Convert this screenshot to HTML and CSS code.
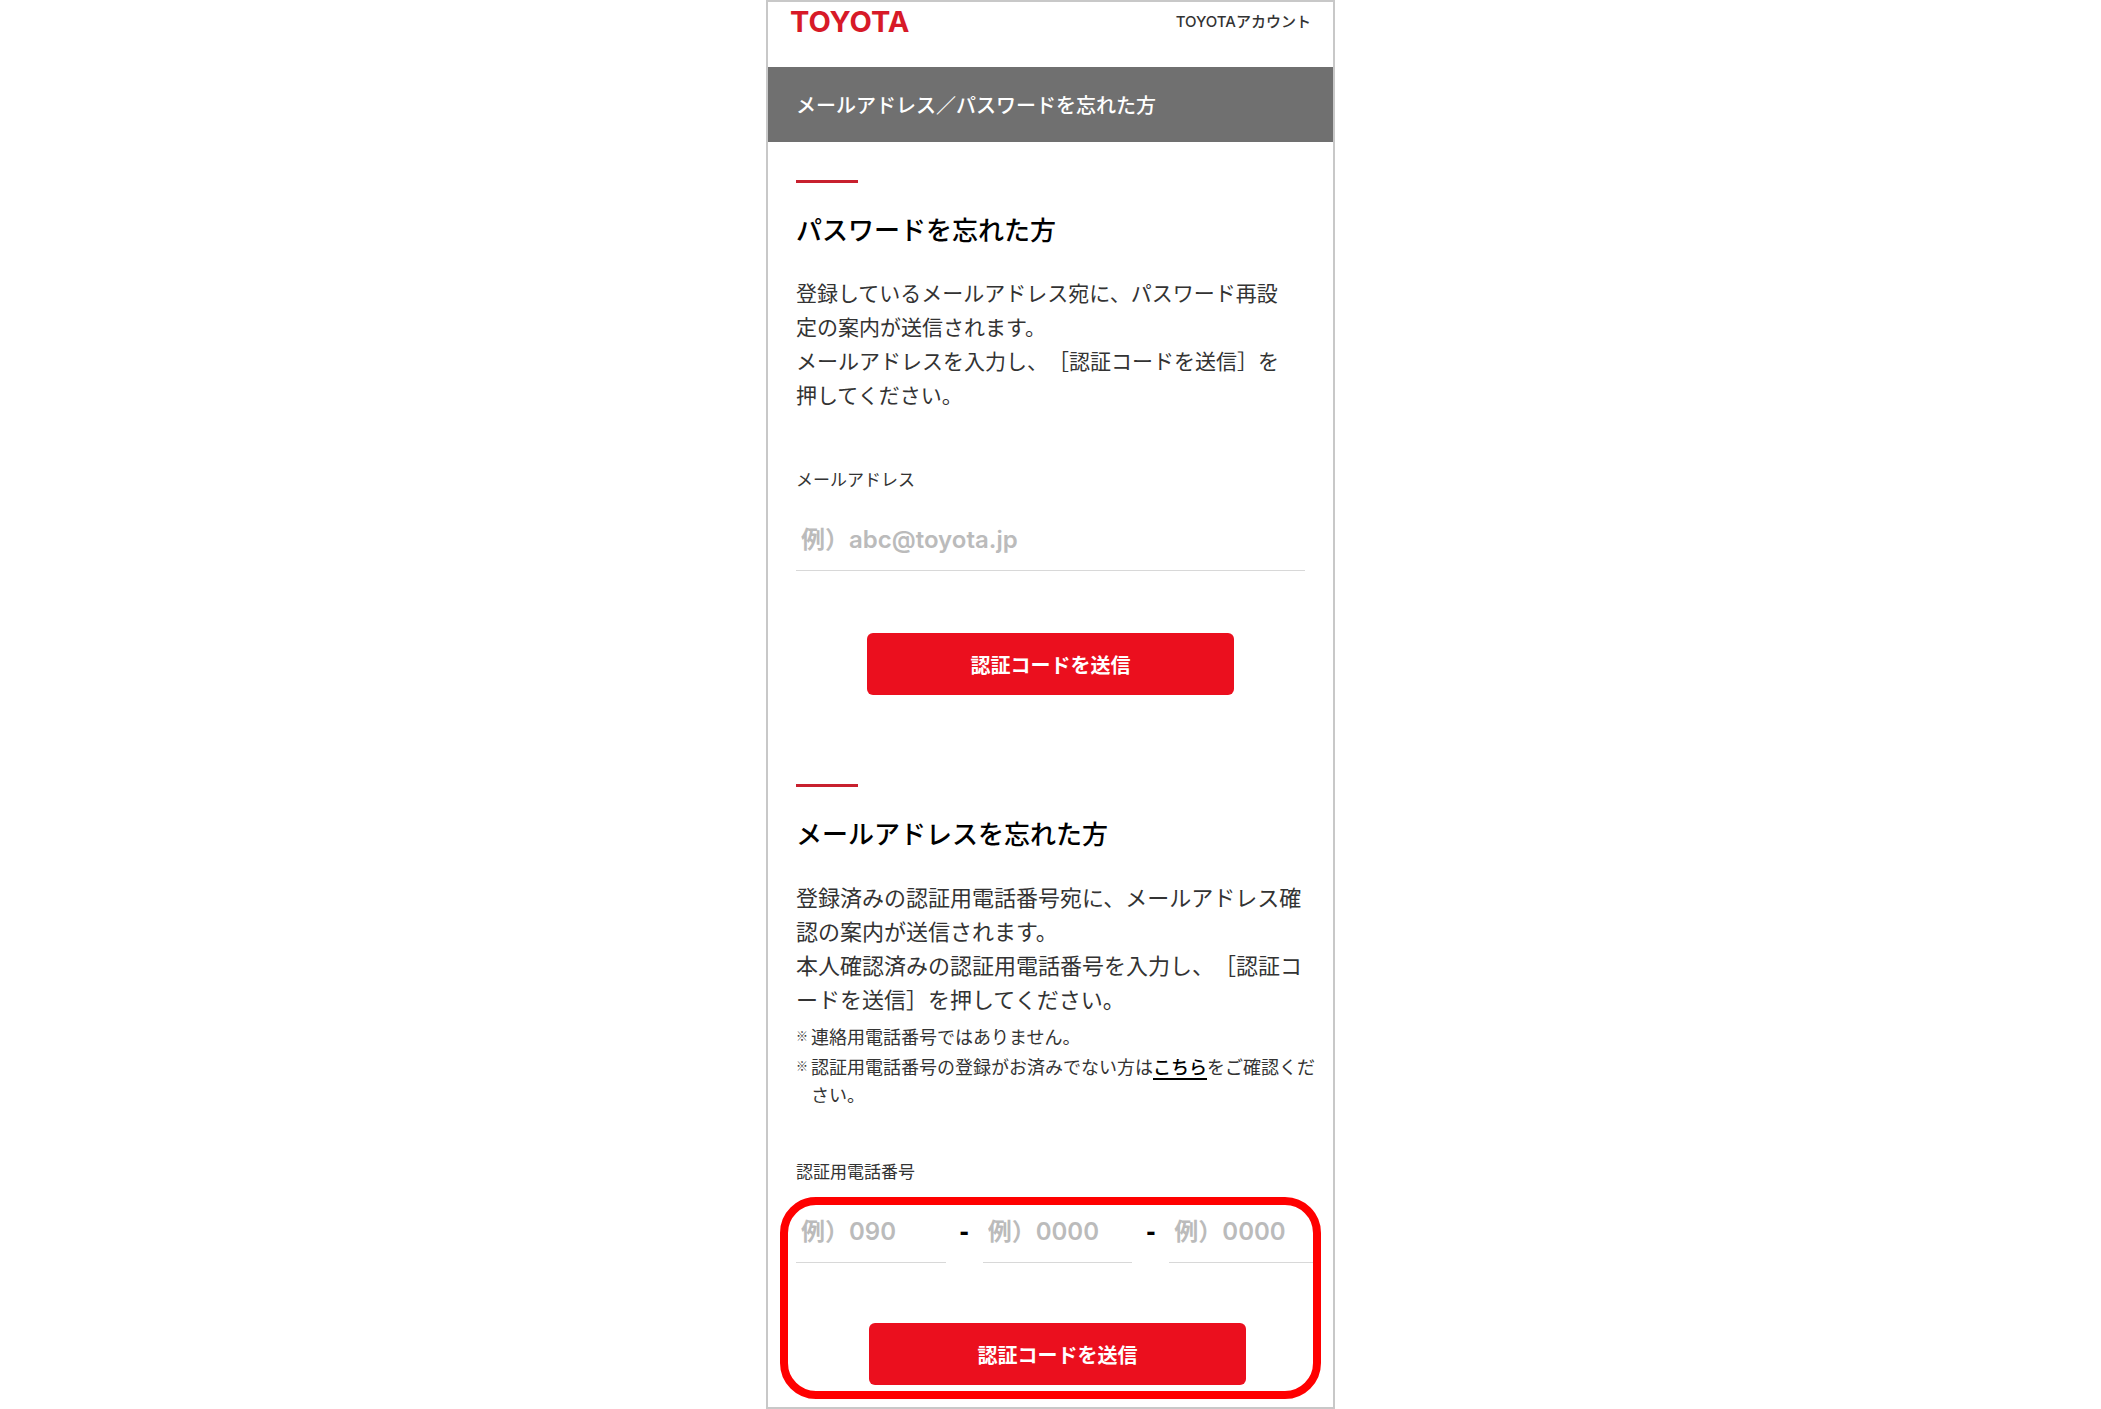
FILE: index.html
```html
<!DOCTYPE html>
<html lang="ja">
<head>
    <meta charset="UTF-8">
    <meta name="viewport" content="width=device-width, initial-scale=1.0">
    <title>メールアドレス／パスワードを忘れた方</title>
    <link rel="stylesheet" href="styles.css">
</head>
<body>
    <div class="screen">
        <header class="header">
            <a href="#" class="logo">TOYOTA</a>
            <span class="account">TOYOTAアカウント</span>
        </header>

        <h1 class="page-title">メールアドレス／パスワードを忘れた方</h1>

        <main>
            <!-- Forgot password -->
            <form class="section">
                <h2>パスワードを忘れた方</h2>
                <p class="lead">登録しているメールアドレス宛に、パスワード再設<br>定の案内が送信されます。<br>メールアドレスを入力し、［認証コードを送信］を<br>押してください。</p>

                <label class="label" for="email">メールアドレス</label>
                <input class="field" type="email" id="email" placeholder="例）abc@toyota.jp">

                <button class="submit" type="button">認証コードを送信</button>
            </form>

            <!-- Forgot mail address -->
            <form class="section section-phone">
                <h2>メールアドレスを忘れた方</h2>
                <p class="lead lead-large">登録済みの認証用電話番号宛に、メールアドレス確<br>認の案内が送信されます。<br>本人確認済みの認証用電話番号を入力し、［認証コ<br>ードを送信］を押してください。</p>
                <ul class="notes">
                    <li>連絡用電話番号ではありません。</li>
                    <li>認証用電話番号の登録がお済みでない方は<a href="#">こちら</a>をご確認くだ<br>さい。</li>
                </ul>

                <label class="label" for="tel1">認証用電話番号</label>
                <div class="highlight">
                    <div class="phone">
                        <input class="field" type="tel" id="tel1" placeholder="例）090">
                        <span class="dash">-</span>
                        <input class="field" type="tel" id="tel2" aria-label="認証用電話番号 2" placeholder="例）0000">
                        <span class="dash">-</span>
                        <input class="field" type="tel" id="tel3" aria-label="認証用電話番号 3" placeholder="例）0000">
                    </div>
                    <button class="submit" type="button">認証コードを送信</button>
                </div>
            </form>
        </main>
    </div>
</body>
</html>
```
FILE: styles.css
```css
* {
    box-sizing: border-box;
}
body {
    margin: 0;
    background-color: #fff;
    color: #333;
    font-family: "Noto Sans CJK JP", sans-serif;
    text-spacing-trim: space-all;
}
.screen {
    max-width: 569px;
    margin: 0 auto;
    border: 2px solid #c8c8c8;
}
.header {
    display: flex;
    justify-content: space-between;
    padding: 5px 22px 30px;
    line-height: 30px;
}
.logo {
    color: #d71a28;
    font-family: Inter, sans-serif;
    font-size: 29px;
    font-weight: 700;
    text-decoration: none;
}
.account {
    font-family: Inter, "Noto Sans CJK JP", sans-serif;
    font-size: 15px;
    font-weight: 500;
}
.page-title {
    margin: 0;
    padding: 0 28px;
    background-color: #707070;
    color: #fff;
    font-size: 20px;
    font-weight: 500;
    line-height: 75px;
}
.section {
    padding: 38px 28px 0;
}
.section-phone {
    padding: 89px 14px 22px 28px;
}
.section::before {
    content: "";
    display: block;
    width: 62px;
    height: 3px;
    background-color: #c8202e;
}
h2 {
    margin: 26px 0;
    color: #000;
    font-size: 26px;
    font-weight: 500;
    line-height: 40px;
}
.lead {
    margin: 0;
    font-size: 21px;
    line-height: 34px;
    white-space: nowrap;
}
.lead-large {
    font-size: 22px;
}
.notes {
    margin: 7px 0 0;
    padding: 0;
    list-style: none;
    font-size: 18px;
    line-height: 28px;
}
.notes li {
    position: relative;
    margin-bottom: 2px;
    padding-left: 15px;
    white-space: nowrap;
}
.notes li::before {
    content: "※";
    position: absolute;
    left: 0;
    font-size: 12px;
    font-weight: 600;
}
.notes a {
    color: #000;
    font-weight: 500;
    text-underline-offset: 4px;
    text-decoration-thickness: 2px;
}
.label {
    display: block;
    margin: 56px 0 17px;
    font-size: 17px;
    line-height: 24px;
}
.section-phone .label {
    margin-top: 51px;
}
.field {
    display: block;
    width: 100%;
    height: 63px;
    padding: 0 5px;
    border: 0;
    border-bottom: 1px solid #d8d8d8;
    background: none;
    font-family: Inter, "Noto Sans CJK JP", sans-serif;
    font-size: 24px;
    font-weight: 600;
}
.field::placeholder {
    color: #bbb;
    opacity: 1;
}
.phone {
    display: flex;
    align-items: center;
}
.phone .field {
    flex: 1;
    min-width: 0;
}
.dash {
    width: 37px;
    color: #000;
    font-family: "Liberation Sans", sans-serif;
    font-size: 28px;
    font-weight: 700;
    text-align: center;
}
.submit {
    display: block;
    width: 72%;
    height: 62px;
    margin: 62px auto 0;
    border: 0;
    border-radius: 6px;
    background-color: #eb0f1e;
    color: #fff;
    font-family: "Noto Sans CJK JP", sans-serif;
    font-size: 20px;
    font-weight: 600;
    cursor: pointer;
}
.section-phone .submit {
    margin-top: 60px;
}
/* Red frame around the phone number form */
.highlight {
    position: relative;
}
.highlight::after {
    content: "";
    position: absolute;
    top: -3px;
    right: -2px;
    bottom: -14px;
    left: -16px;
    border: 8px solid #f00;
    border-radius: 36px;
    pointer-events: none;
}
```
